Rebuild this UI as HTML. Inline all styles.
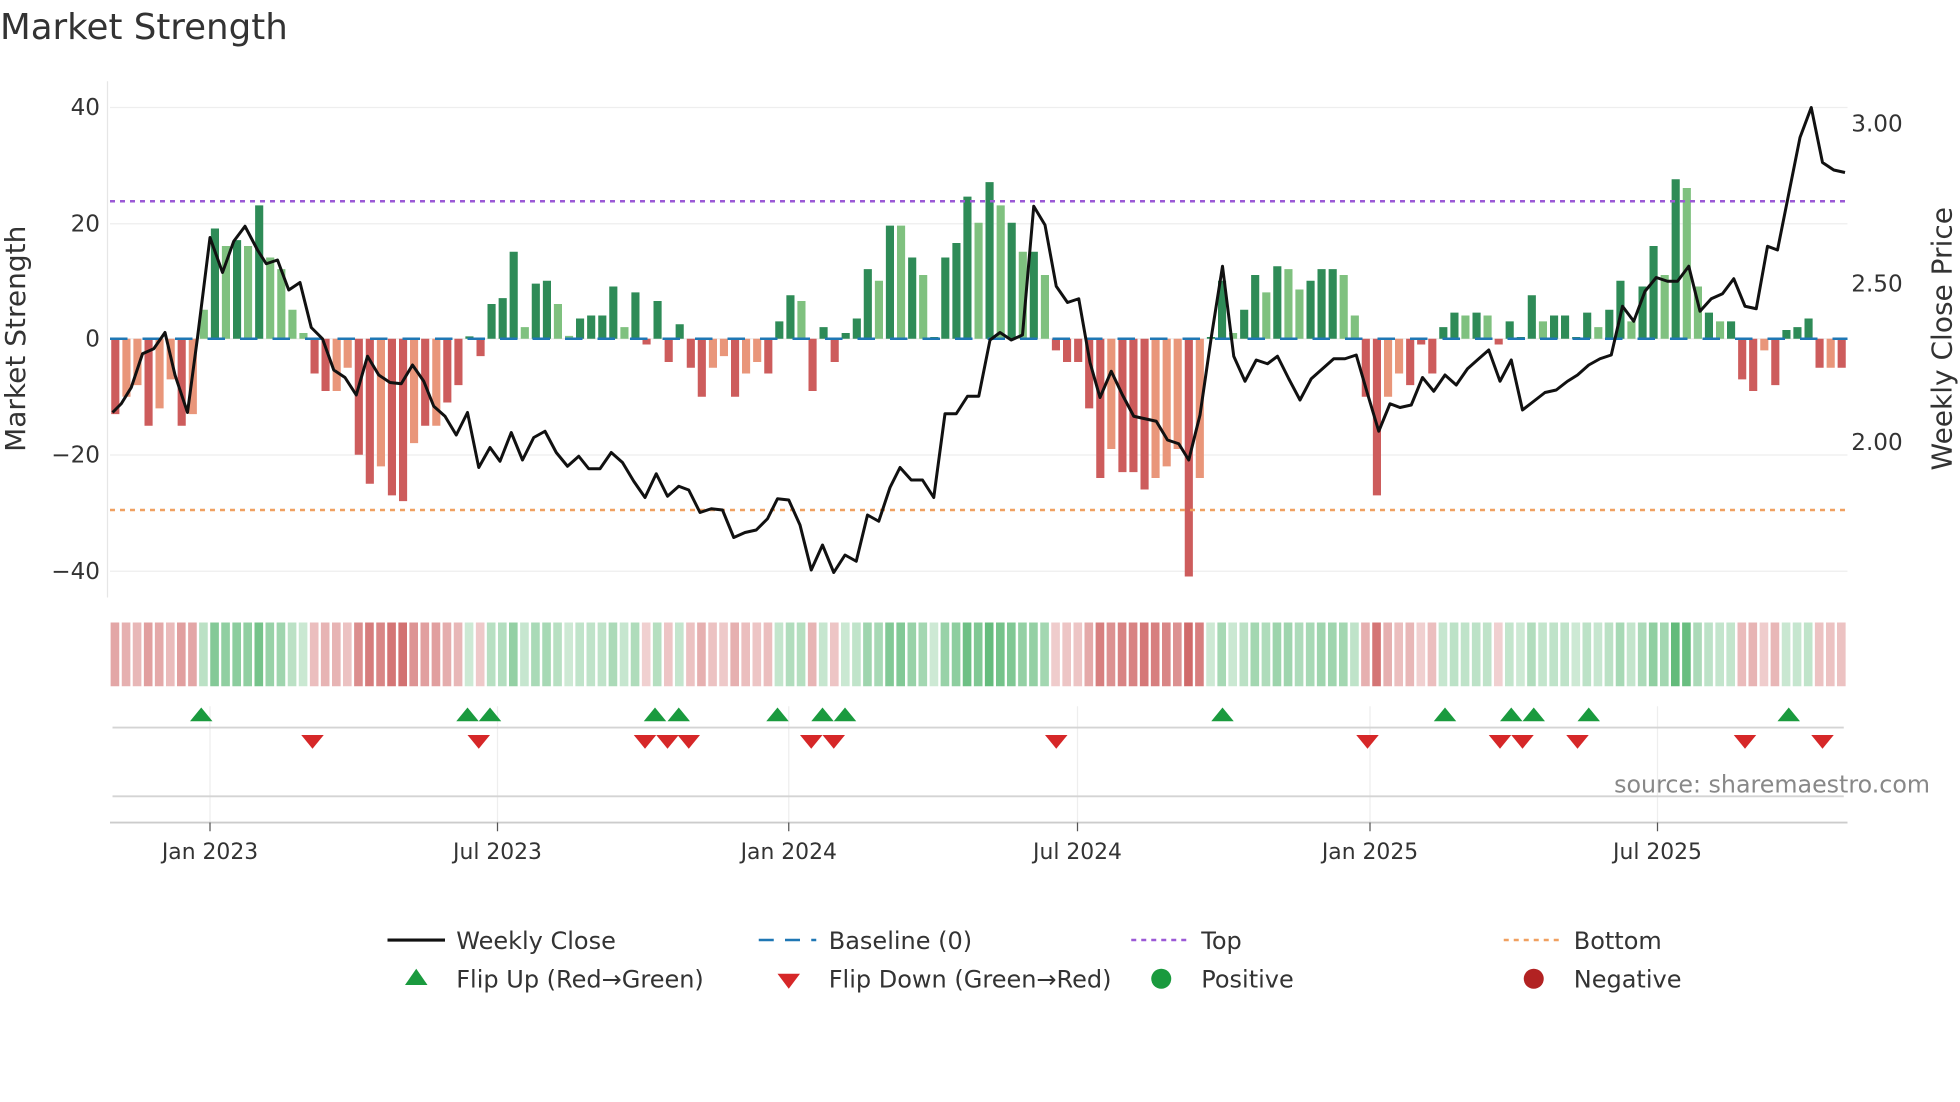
<!DOCTYPE html>
<html><head><meta charset="utf-8"><style>
html,body{margin:0;padding:0;background:#fff;}
svg{display:block;font-family:"DejaVu Sans","Liberation Sans",sans-serif;}
</style></head><body>
<svg id="s" width="1960" height="1102" viewBox="0 0 1568 881.6" xmlns="http://www.w3.org/2000/svg">
<rect width="1568" height="882" fill="#fff"/>
<text x="0" y="31" font-size="28.5" fill="#333">Market Strength</text>
<g stroke="#eee" stroke-width="1">
<line x1="88" y1="86" x2="1478" y2="86"/><line x1="88" y1="179" x2="1478" y2="179"/>
<line x1="88" y1="271" x2="1478" y2="271"/><line x1="88" y1="364" x2="1478" y2="364"/><line x1="88" y1="457" x2="1478" y2="457"/>
</g>
<line x1="86" y1="65" x2="86" y2="478" stroke="#e6e6e6"/>
<g font-size="18.5" fill="#333" text-anchor="end">
<text x="80" y="92">40</text><text x="80" y="185">20</text><text x="80" y="277">0</text><text x="80" y="370">−20</text><text x="80" y="463">−40</text>
</g>
<g font-size="18.5" fill="#333">
<text x="1481" y="105">3.00</text><text x="1481" y="233">2.50</text><text x="1481" y="360">2.00</text>
</g>
<text transform="translate(20,271) rotate(-90)" font-size="22.4" fill="#333" text-anchor="middle">Market Strength</text>
<text transform="translate(1561,271) rotate(-90)" font-size="22.4" fill="#333" text-anchor="middle">Weekly Close Price</text>
<g id="bars"></g>
<g id="heat"></g>
<line x1="88" y1="271" x2="1478" y2="271" stroke="#1f77b4" stroke-width="2" stroke-dasharray="14,12"/>
<line x1="88" y1="161" x2="1478" y2="161" stroke="#9b59d6" stroke-width="2" stroke-dasharray="4,4"/>
<line x1="88" y1="408" x2="1478" y2="408" stroke="#f0a060" stroke-width="2" stroke-dasharray="4,4"/>
<polyline id="price" fill="none" stroke="#111" stroke-width="2.4" stroke-linejoin="round" points="0,0"/>
<g stroke="#eee"><line x1="168" y1="565" x2="168" y2="660"/><line x1="398" y1="565" x2="398" y2="660"/><line x1="631" y1="565" x2="631" y2="660"/><line x1="862" y1="565" x2="862" y2="660"/><line x1="1096" y1="565" x2="1096" y2="660"/><line x1="1326" y1="565" x2="1326" y2="660"/></g>
<line x1="90" y1="582" x2="1475" y2="582" stroke="#d4d4d4" stroke-width="1.5"/>
<line x1="90" y1="637" x2="1475" y2="637" stroke="#d4d4d4" stroke-width="1.5"/>
<line x1="88" y1="658" x2="1478" y2="658" stroke="#ccc" stroke-width="1.5"/>
<g id="tri"></g>
<text x="1544" y="634" font-size="19" fill="#888" text-anchor="end">source: sharemaestro.com</text>
<g stroke="#555"><line x1="168" y1="658" x2="168" y2="665"/><line x1="398" y1="658" x2="398" y2="665"/><line x1="631" y1="658" x2="631" y2="665"/><line x1="862" y1="658" x2="862" y2="665"/><line x1="1096" y1="658" x2="1096" y2="665"/><line x1="1326" y1="658" x2="1326" y2="665"/></g>
<g font-size="17.5" fill="#333" text-anchor="middle">
<text x="168" y="687">Jan 2023</text><text x="398" y="687">Jul 2023</text><text x="631" y="687">Jan 2024</text><text x="862" y="687">Jul 2024</text><text x="1096" y="687">Jan 2025</text><text x="1326" y="687">Jul 2025</text>
</g>
<g font-size="19.2" fill="#333">
<line x1="310" y1="752" x2="356" y2="752" stroke="#111" stroke-width="2.5"/><text x="365" y="759">Weekly Close</text>
<line x1="607" y1="752" x2="653" y2="752" stroke="#1f77b4" stroke-width="2" stroke-dasharray="12,9"/><text x="663" y="759">Baseline (0)</text>
<line x1="905" y1="752" x2="951" y2="752" stroke="#9b59d6" stroke-width="2" stroke-dasharray="4,4"/><text x="961" y="759">Top</text>
<line x1="1203" y1="752" x2="1249" y2="752" stroke="#f0a060" stroke-width="2" stroke-dasharray="4,4"/><text x="1259" y="759">Bottom</text>
<polygon points="333,775 324,788 342,788" fill="#1a9a3e"/><text x="365" y="790">Flip Up (Red→Green)</text>
<polygon points="622,779 640,779 631,791" fill="#d62728"/><text x="663" y="790">Flip Down (Green→Red)</text>
<circle cx="929" cy="783" r="8" fill="#1a9a3e"/><text x="961" y="790">Positive</text>
<circle cx="1227" cy="783" r="8" fill="#b22222"/><text x="1259" y="790">Negative</text>
</g>
</svg>
<script>
(function(){
var ns="http://www.w3.org/2000/svg";
function el(parent,tag,attrs){var e=document.createElementNS(ns,tag);for(var k in attrs){e.setAttribute(k,String(attrs[k]));}parent.appendChild(e);return e;}
var p=[90,330,97,323,105,310,114,283,123,279,132,266,140,300,150,330,158,270,168,190,178,218,187,193,196,181,206,200,213,211,222,208,231,232,240,226,249,262,258,271,267,296,276,302,285,316,294,285,303,300,312,306,321,307,330,292,339,305,347,325,356,333,365,348,374,330,383,374,392,358,400,369,409,346,418,368,427,350,436,345,445,362,454,373,463,365,471,375,480,375,489,362,498,370,507,385,516,398,525,379,534,397,543,389,551,392,560,410,569,407,578,408,587,430,596,426,605,424,614,415,622,399,631,400,640,420,649,456,658,436,667,458,676,444,685,449,694,412,703,417,712,390,720,374,729,384,738,384,747,398,756,331,765,331,774,317,783,317,792,272,800,266,809,272,818,268,827,165,836,180,845,229,854,242,863,239,872,290,880,318,889,297,898,316,907,333,916,335,925,337,934,352,943,355,951,368,960,332,969,270,978,213,987,285,996,305,1005,288,1014,291,1022,285,1031,303,1040,320,1049,303,1058,295,1067,287,1076,287,1085,284,1094,315,1103,345,1112,323,1120,326,1129,324,1138,302,1147,313,1156,300,1165,308,1174,295,1183,287,1191,280,1200,305,1209,288,1218,328,1227,321,1236,314,1245,312,1254,305,1262,300,1271,292,1280,287,1289,284,1298,245,1307,257,1316,233,1325,222,1334,225,1342,225,1351,213,1360,249,1369,239,1378,235,1387,223,1396,245,1405,247,1414,197,1422,200,1431,155,1440,110,1449,86,1458,130,1467,136,1476,138];
var ps=[];for(var j=0;j<p.length;j+=2)ps.push(p[j]+','+p[j+1]);
document.getElementById('price').setAttribute('points',ps.join(' '));
var v=[[-13,1],[-10,0],[-8,0],[-15,1],[-12,0],[-7,0],[-15,1],[-13,0],[5,0],[19,1],[16,0],[17,1],[16,0],[23,1],[14,0],[12,0],[5,0],[1,0],[-6,1],[-9,1],[-9,0],[-5,0],[-20,1],[-25,1],[-22,0],[-27,1],[-28,1],[-18,0],[-15,1],[-15,0],[-11,1],[-8,1],[0.4,1],[-3,1],[6,1],[7,1],[15,1],[2,0],[9.5,1],[10,1],[6,0],[0.5,0],[3.5,1],[4,1],[4,1],[9,1],[2,0],[8,1],[-1,1],[6.5,1],[-4,1],[2.5,1],[-5,1],[-10,1],[-5,0],[-3,0],[-10,1],[-6,0],[-4,0],[-6,1],[3,1],[7.5,1],[6.5,0],[-9,1],[2,1],[-4,1],[1,1],[3.5,1],[12,1],[10,0],[19.5,1],[19.5,0],[14,1],[11,0],[0.3,1],[14,1],[16.5,1],[24.5,1],[20,0],[27,1],[23,0],[20,1],[15,0],[15,1],[11,0],[-2,1],[-4,1],[-4,1],[-12,1],[-24,1],[-19,0],[-23,1],[-23,1],[-26,1],[-24,0],[-22,0],[-19,0],[-41,1],[-24,0],[0.3,1],[10,1],[1,0],[5,1],[11,1],[8,0],[12.5,1],[12,0],[8.5,0],[10,1],[12,1],[12,1],[11,0],[4,0],[-10,1],[-27,1],[-10,0],[-6,0],[-8,1],[-1,1],[-6,1],[2,1],[4.5,1],[4,0],[4.5,1],[4,0],[-1,1],[3,1],[0.3,1],[7.5,1],[3,0],[4,1],[4,1],[0.3,1],[4.5,1],[2,0],[5,1],[10,1],[3,0],[9,1],[16,1],[11,0],[27.5,1],[26,0],[9,0],[4.5,1],[3,0],[3,1],[-7,1],[-9,1],[-2,0],[-8,1],[1.5,1],[2,1],[3.5,1],[-5,1],[-5,0],[-5,1]];
var bars=document.getElementById('bars'),heat=document.getElementById('heat');
var n=v.length,x0=88,dx=(1478-88)/n;
for(var i=0;i<n;i++){var x=x0+i*dx,val=v[i][0],d=v[i][1],y=271-val*4.64;
var c=val>=0?(d?'#2e8b57':'#7fc17f'):(d?'#cd5c5c':'#e9967a');
var top=Math.min(y,271),ht=Math.max(Math.abs(val*4.64),1);
el(bars,'rect',{x:(x+1).toFixed(1),y:top.toFixed(1),width:(dx-2.4).toFixed(1),height:ht.toFixed(1),fill:c});
var a=0.25+Math.min(Math.abs(val)/30,1)*0.6;
el(heat,'rect',{x:(x+0.5).toFixed(1),y:498,width:(dx-2).toFixed(1),height:51,fill:val>=0?'#3caa5a':'#c85050','fill-opacity':a.toFixed(2)});}
var up=[161,374,392,524,543,622,658,676,978,1156,1209,1227,1271,1431],dn=[250,383,516,534,551,649,667,845,1094,1200,1218,1262,1396,1458];
var tri=document.getElementById('tri');
up.forEach(function(x){el(tri,'polygon',{points:x+',566 '+(x-9)+',577 '+(x+9)+',577',fill:'#1a9a3e'});});
dn.forEach(function(x){el(tri,'polygon',{points:(x-9)+',588 '+(x+9)+',588 '+x+',599',fill:'#d62728'});});
})();
</script>
</body></html>
